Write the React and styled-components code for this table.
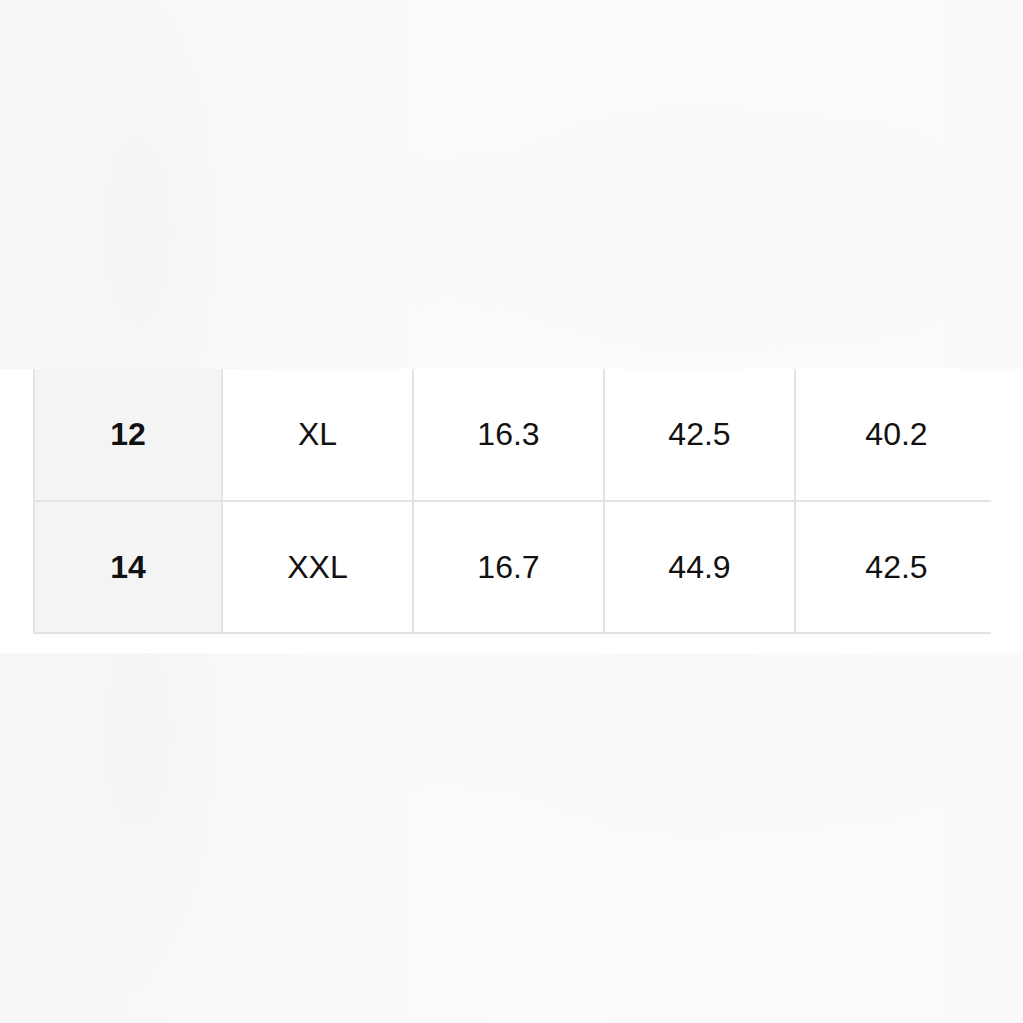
import React from "react";
import styled, { createGlobalStyle } from "styled-components";

const Global = createGlobalStyle`
  html, body { margin: 0; padding: 0; background: #ffffff; }
  body { font-family: "Liberation Sans", Arial, sans-serif; }
`;

const Page = styled.div`
  width: 1023px;
  height: 1023px;
  display: flex;
  flex-direction: column;
  overflow: hidden;
  background: #ffffff;
`;

const Haze = styled.div`
  height: ${(p) => p.$h}px;
  flex: ${(p) => (p.$grow ? "1 1 auto" : "0 0 auto")};
  background:
    radial-gradient(ellipse 90px 260px at 140px ${(p) => p.$cy}px, #f4f4f4 0%, rgba(246,246,246,0.6) 55%, rgba(250,250,250,0) 100%),
    radial-gradient(ellipse 330px 150px at 680px ${(p) => p.$cy2}px, #f8f8f8 0%, rgba(250,250,250,0) 100%),
    linear-gradient(90deg, #f7f7f7 0%, #f9f9f9 25%, #fbfbfb 50%, #fafafa 100%);
`;

const TableArea = styled.section`
  flex: 0 0 auto;
  background: #ffffff;
  padding: 0 0 19px 33px;
`;

const Grid = styled.div`
  display: grid;
  grid-template-columns: 188px 191px 191px 191px 197px;
  width: 958px;
`;

const Cell = styled.div`
  height: ${(p) => p.$h}px;
  box-sizing: border-box;
  border-left: 2px solid #e3e3e3;
  border-bottom: 2px solid #e3e3e3;
  background: ${(p) => (p.$head ? "#f4f4f4" : "#ffffff")};
  display: flex;
  align-items: center;
  justify-content: center;
  font-family: "Liberation Sans", Arial, sans-serif;
  font-size: 32px;
  font-weight: ${(p) => (p.$head ? 700 : 400)};
  color: #111111;
  padding-left: ${(p) => (p.$last ? 6 : 0)}px;
`;

const rows = [
  ["12", "XL", "16.3", "42.5", "40.2"],
  ["14", "XXL", "16.7", "44.9", "42.5"],
];

export default function App() {
  return (
    <>
      <Global />
      <Page>
        <Haze $h={369} $cy={230} $cy2={230} />
        <TableArea>
          <Grid>
            {rows.map((r, i) =>
              r.map((v, j) => (
                <Cell
                  key={`${i}-${j}`}
                  $head={j === 0}
                  $last={j === r.length - 1}
                  $h={i === 0 ? 133 : 132}
                >
                  {v}
                </Cell>
              ))
            )}
          </Grid>
        </TableArea>
        <Haze $grow $cy={80} $cy2={60} />
      </Page>
    </>
  );
}
